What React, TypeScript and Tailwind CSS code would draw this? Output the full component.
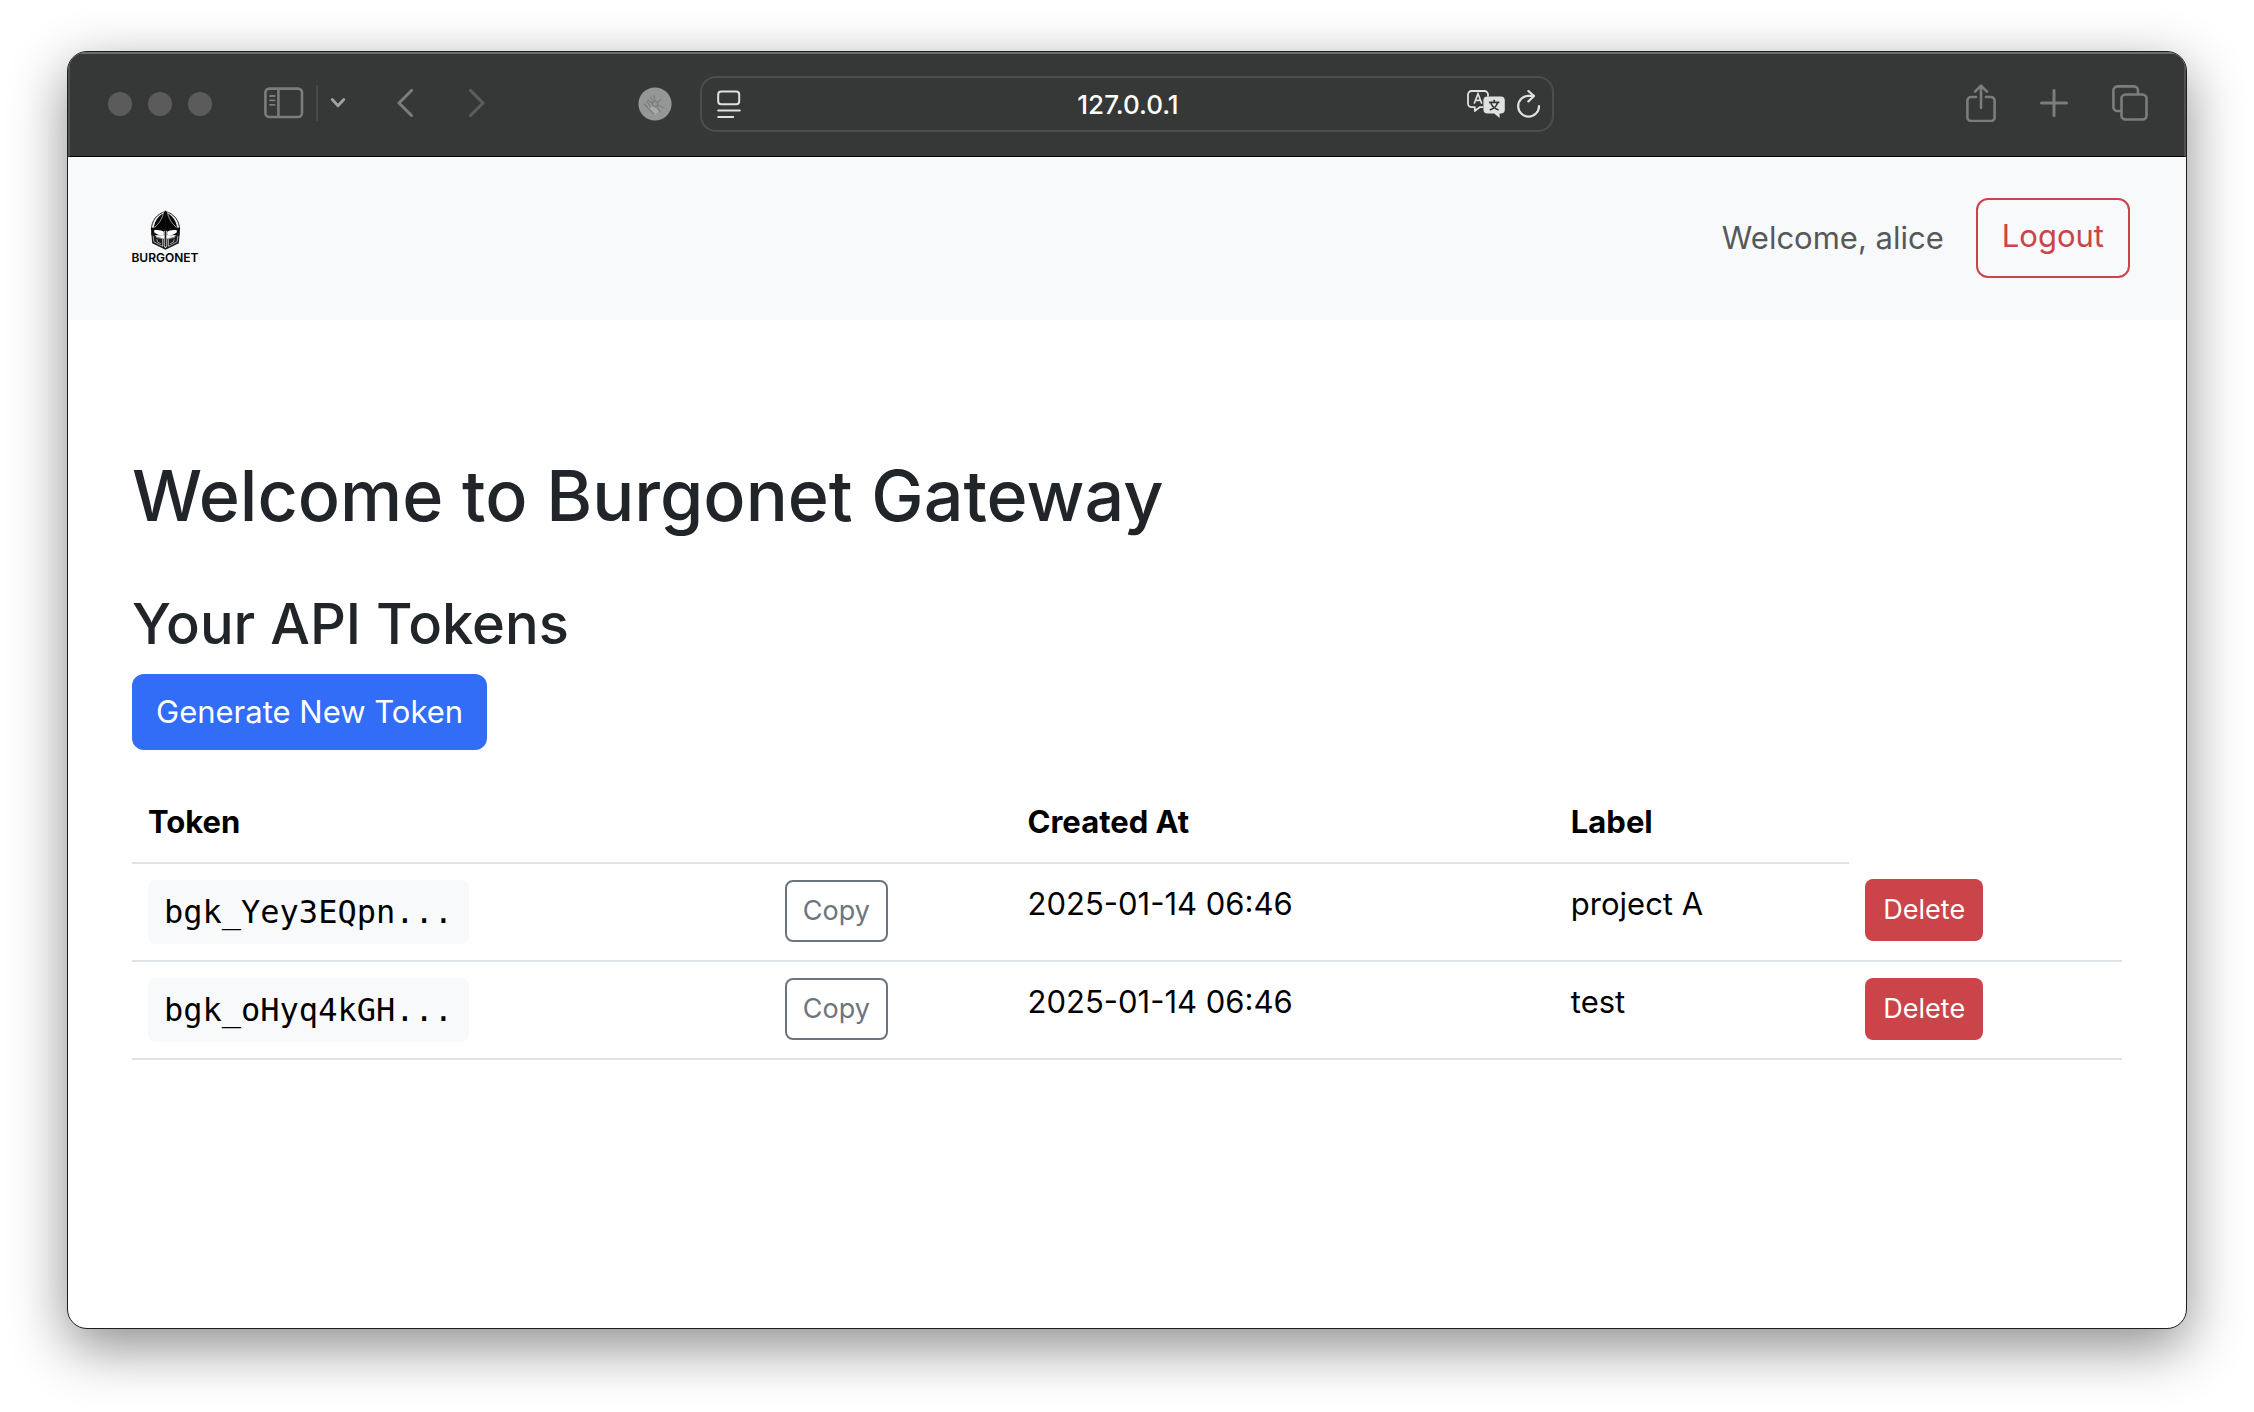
import React from "react";

type Token = { prefix: string; createdAt: string; label: string };

const tokens: Token[] = [
  { prefix: "bgk_Yey3EQpn...", createdAt: "2025-01-14 06:46", label: "project A" },
  { prefix: "bgk_oHyq4kGH...", createdAt: "2025-01-14 06:46", label: "test" },
];

function Chevron({ d, className }: { d: string; className: string }) {
  return (
    <svg viewBox="0 0 16 28" className={className} fill="none" stroke="currentColor" strokeWidth="3" strokeLinecap="round" strokeLinejoin="round">
      <path d={d} />
    </svg>
  );
}

function SidebarIcon() {
  return (
    <svg viewBox="0 0 40 32" className="h-8 w-10" fill="none" stroke="currentColor" strokeWidth="2.6">
      <rect x="1.4" y="1.6" width="36.6" height="28.4" rx="4" />
      <path d="M14.4 1.6v28.4" />
      <path d="M6 9h4.6M6 13.4h4.6M6 17.8h4.6" strokeWidth="1.8" strokeLinecap="round" />
    </svg>
  );
}

function ExtensionIcon() {
  return (
    <svg viewBox="0 0 34 34" className="size-[34px]">
      <circle cx="17" cy="17" r="16.6" fill="#949796" />
      <path d="M11 21.500l3-3 7 5.500-4 4.500z" fill="#a8abaa" />
      <g fill="none" stroke="#7b7e7d" strokeWidth="1.2" strokeLinecap="round">
        <circle cx="17" cy="17" r="2.6" />
        <path d="M10 13l5 4M12.500 10l3.200 4.600M16 8.500l1 5M20 15l3-2.500M20 18l6 3M19 20l3 5M9 14.500l3.500 5.500M6 17l10 10" />
      </g>
    </svg>
  );
}

function ReaderIcon() {
  return (
    <svg viewBox="0 0 24 28" className="h-7 w-6" fill="none" stroke="#dfe1e0" strokeWidth="2" strokeLinecap="round">
      <rect x="1.200" y="1.600" width="21" height="12.600" rx="3" />
      <path d="M1.200 20.500h21.600M1.200 27h15" />
    </svg>
  );
}

function TranslateIcon() {
  return (
    <svg viewBox="0 0 38 28" className="h-7 w-[38px]">
      <path
        d="M16 17.200h-3.400L7.800 21v-3.800H4.600A3.600 3.600 0 0 1 1 13.600V4.600A3.600 3.600 0 0 1 4.600 1h12.800A3.600 3.600 0 0 1 21 4.600v2"
        fill="none"
        stroke="#dfe1e0"
        strokeWidth="1.800"
        strokeLinejoin="round"
      />
      <path d="M7.200 13.600L11 3.800l3.800 9.800M8.400 10.400h5.200" fill="none" stroke="#dfe1e0" strokeWidth="1.600" />
      <path d="M20.400 6.600h13.400A4 4 0 0 1 37.800 10.600v8.800a4 4 0 0 1-4 4H32.600V28l-5.400-4.600h-6.800a4 4 0 0 1-4-4v-8.800a4 4 0 0 1 4-4z" fill="#dfe1e0" />
      <path d="M22 12.400h10.400M27.200 9.800v2.600M23.800 12.400c.8 3.600 3.600 6.200 7.800 7.600M30.600 12.400c-.8 3.600-3.600 6.200-7.800 7.600" fill="none" stroke="#363837" strokeWidth="1.700" />
    </svg>
  );
}

function ReloadIcon() {
  return (
    <svg viewBox="0 0 24 28" className="h-7 w-6" fill="none" stroke="#dfe1e0" strokeWidth="2.200" strokeLinecap="round" strokeLinejoin="round">
      <path d="M22 16.200A10.400 10.400 0 1 1 11.600 5.800h5.200" />
      <path d="M11.400 1l5.600 5-5.600 5.400" />
    </svg>
  );
}

function ShareIcon() {
  return (
    <svg viewBox="0 0 30 38" className="h-[38px] w-[30px]" fill="none" stroke="currentColor" strokeWidth="2.600" strokeLinecap="round" strokeLinejoin="round">
      <path d="M10 13H5a3.600 3.600 0 0 0-3.600 3.600v16.800A3.600 3.600 0 0 0 5 37h20a3.600 3.600 0 0 0 3.600-3.600V16.600A3.600 3.600 0 0 0 25 13h-5" />
      <path d="M15 24V2M9 7.600l6-6 6 6" />
    </svg>
  );
}

function PlusIcon() {
  return (
    <svg viewBox="0 0 28 28" className="size-7" fill="none" stroke="currentColor" strokeWidth="3" strokeLinecap="round">
      <path d="M14 1.500v25M1.500 14h25" />
    </svg>
  );
}

function TabsIcon() {
  return (
    <svg viewBox="0 0 36 36" className="size-9" fill="none" stroke="currentColor" strokeWidth="2.600">
      <rect x="9.500" y="9.500" width="25" height="25" rx="4" />
      <path d="M9 26H5.400a4 4 0 0 1-4-4V5.400a4 4 0 0 1 4-4H22a4 4 0 0 1 4 4V9" />
    </svg>
  );
}

function HelmetIcon() {
  return (
    <svg viewBox="0 0 92 120" className="h-10 w-[31px]">
      <path d="M46 4C20 12 4 32 4 58l42 4 42-4C88 32 72 12 46 4z" fill="#f4f4f4" stroke="#222" strokeWidth="3" />
      <path d="M40 10C22 20 13 36 11 54l14-4C35 38 41 26 40 10zM52 10c18 10 27 26 29 44l-14-4C57 38 51 26 52 10z" fill="#0a0a0a" />
      <path d="M46 0l6 7c3 18 12 33 28 46l-34 8-34-8C28 40 37 25 40 7z" fill="#050505" stroke="#e5e5e5" strokeWidth="2" />
      <path d="M2 54c16-4 32-2 44 4 12-6 28-8 44-4l-2 22H4z" fill="#0d0d0d" />
      <path d="M3 66l3 34 40 19 40-19 3-34-16 14-22 6-5-4-5 4-22-6z" fill="#1c1c1c" />
      <path d="M12 61c12-2 22 0 29 5l-1 11c-12 0-22-4-28-10zM80 61c-12-2-22 0-29 5l1 11c12 0 22-4 28-10z" fill="#fff" />
      <path d="M9 78l2 17 26 14V86L18 82M83 78l-2 17-26 14V86l19-4M20 88l2 8 10 5M72 88l-2 8-10 5" fill="none" stroke="#b5b5b5" strokeWidth="2.500" />
      <path d="M42 64h8v44l-4 6-4-6z" fill="#555" stroke="#fff" strokeWidth="2" />
      <path d="M46 12v96" stroke="#111" strokeWidth="2.500" />
    </svg>
  );
}

function Toolbar() {
  return (
    <div className="grid h-[105px] shrink-0 grid-cols-[minmax(0,31fr)_minmax(0,42fr)_minmax(0,31fr)] items-center border-x-2 border-t-2 border-b border-x-[#505251] border-t-[#6b6d6c] border-b-black bg-[#363837] pb-0.5 text-[#7b7d7c]">
      <div className="flex items-center pr-7 pl-[38px]">
        <div className="flex gap-4">
          <span className="size-6 rounded-full bg-[#5b5b5b]" />
          <span className="size-6 rounded-full bg-[#5b5b5b]" />
          <span className="size-6 rounded-full bg-[#5b5b5b]" />
        </div>
        <div className="ml-[52px] flex flex-1 items-center pb-0.5">
          <button aria-label="Show sidebar"><SidebarIcon /></button>
          <span className="ml-3 h-9 w-0.5 bg-[#484a49]" />
          <button aria-label="Sidebar menu" className="ml-3 text-[#a0a2a1]">
            <svg viewBox="0 0 16 12" className="h-3 w-4" fill="none" stroke="currentColor" strokeWidth="2.800" strokeLinecap="round" strokeLinejoin="round">
              <path d="M2.200 2.500L8 8.800l5.800-6.300" />
            </svg>
          </button>
          <button aria-label="Back" className="ml-[51px]"><Chevron d="M14.500 1.500L2 14l12.500 12.500" className="h-7 w-4" /></button>
          <button aria-label="Forward" className="ml-14 text-[#5c5e5d]"><Chevron d="M1.500 1.500L14 14 1.500 26.500" className="h-7 w-4" /></button>
        </div>
        <button aria-label="Extension"><ExtensionIcon /></button>
      </div>
      <div className="flex h-14 items-center rounded-2xl border-2 border-[#4c4e4d] pr-[11px] pl-[13px]">
        <button aria-label="Reader" className="flex w-24 pl-0.5"><ReaderIcon /></button>
        <input aria-label="Address" defaultValue="127.0.0.1" className="min-w-0 flex-1 bg-transparent text-center text-[26px] font-medium text-white outline-none" />
        <div className="flex w-24 justify-end gap-3">
          <button aria-label="Translate"><TranslateIcon /></button>
          <button aria-label="Reload"><ReloadIcon /></button>
        </div>
      </div>
      <div className="flex items-center justify-end pr-9 pb-0.5">
        <button aria-label="Share"><ShareIcon /></button>
        <button aria-label="New tab" className="ml-11"><PlusIcon /></button>
        <button aria-label="Show tabs" className="ml-11"><TabsIcon /></button>
      </div>
    </div>
  );
}

export default function App() {
  return (
    <div className="flex min-h-screen flex-col bg-white px-[67px] pt-[51px] pb-[83px] font-['Inter',sans-serif]">
      <div className="flex flex-1 flex-col overflow-hidden rounded-[20px] border border-[#1d1f1e] bg-white shadow-[0_18px_56px_rgba(0,0,0,0.45)]">
        <Toolbar />
        <header className="flex items-center justify-between bg-[#f8f9fb] pt-[41px] pr-14 pb-[42px] pl-[57px]">
          <a href="#" className="flex h-20 w-20 flex-col items-center pt-3 text-black">
            <HelmetIcon />
            <span className="text-[12px] leading-4 font-semibold">BURGONET</span>
          </a>
          <div className="flex items-center gap-8">
            <span className="text-[31px] leading-12 text-[#565859]">Welcome, alice</span>
            <button className="h-20 rounded-xl border-2 border-[#cb444a] px-6 pb-1 text-[31px] leading-12 text-[#cb444a]">Logout</button>
          </div>
        </header>
        <main className="px-16 pt-[130px]">
          <h1 className="text-[70px] leading-[92px] font-medium text-[#212529]">Welcome to Burgonet Gateway</h1>
          <h2 className="mt-[45px] text-[56px] leading-[74px] font-medium text-[#212529]">Your API Tokens</h2>
          <button className="mt-[13px] h-[76px] rounded-xl bg-[#316df6] px-6 text-[31px] leading-12 text-white">Generate New Token</button>
          <table className="mt-8 w-full table-fixed border-collapse text-left text-[31px] leading-12 text-black">
            <colgroup>
              <col className="w-[32%]" />
              <col className="w-[12.2%]" />
              <col className="w-[27.3%]" />
              <col className="w-[14.8%]" />
              <col />
            </colgroup>
            <thead>
              <tr>
                <th colSpan={2} className="border-b-2 border-[#dee2e6] p-4 font-bold">Token</th>
                <th className="border-b-2 border-[#dee2e6] p-4 font-bold">Created At</th>
                <th className="border-b-2 border-[#dee2e6] p-4 font-bold">Label</th>
              </tr>
            </thead>
            <tbody>
              {tokens.map((t) => (
                <tr key={t.prefix} className="border-b-2 border-[#dee2e6] align-top">
                  <td className="p-4">
                    <code className="block w-fit rounded-lg bg-[#f8f9fb] px-4 py-2 font-['DejaVu_Sans_Mono',monospace] text-[32px] leading-12">{t.prefix}</code>
                  </td>
                  <td className="p-4">
                    <button className="block h-[62px] rounded-lg border-2 border-[#6c757d] px-4 text-[27px] leading-[42px] text-[#6c757d]">Copy</button>
                  </td>
                  <td className="p-4">{t.createdAt}</td>
                  <td className="p-4">{t.label}</td>
                  <td className="p-4">
                    <button className="block h-[62px] rounded-lg bg-[#cb444a] px-[18px] text-[27px] leading-[42px] text-white">Delete</button>
                  </td>
                </tr>
              ))}
            </tbody>
          </table>
        </main>
      </div>
    </div>
  );
}
